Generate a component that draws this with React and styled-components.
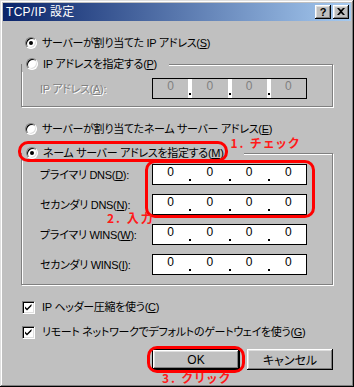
import React from 'react';
import styled, { createGlobalStyle } from 'styled-components';

const GlobalStyle = createGlobalStyle`
  html, body {
    margin: 0;
    padding: 0;
    background: #c0c0c0;
  }
  body {
    font-family: "Liberation Sans", "Noto Sans CJK JP", sans-serif;
    font-size: 11px;
    font-feature-settings: "palt";
  }
`;

const dnsRows = [
  { label: 'プライマリ DNS', key: 'D' },
  { label: 'セカンダリ DNS', key: 'N' },
  { label: 'プライマリ WINS', key: 'W' },
  { label: 'セカンダリ WINS', key: 'I' },
];

// Mnemonic label like "アドレス(S)" with the letter underlined
const Mnemonic = ({ text, k, colon }) => (
  <LabelText>
    {text}(<u>{k}</u>){colon ? ':' : ''}
  </LabelText>
);

const IpField = ({ disabled, row }) => {
  const parts = [];
  for (let i = 0; i < 4; i++) {
    parts.push(<Segment key={`s${i}`}>0</Segment>);
    if (i < 3) parts.push(<Dot key={`d${i}`} />);
  }
  return (
    <IpBox $disabled={disabled} $row={row}>
      {parts}
    </IpBox>
  );
};

const App = () => {
  return (
    <>
      <GlobalStyle />
      <Window>
        <TitleBar>
          <TitleText>TCP/IP 設定</TitleText>
          <TitleButtons>
            <TitleButton aria-label="Help">?</TitleButton>
            <TitleButton aria-label="Close">
              <svg width="8" height="7" viewBox="0 0 8 7">
                <path d="M0 0h2l2 2 2-2h2L5 3.5 8 7H6L4 5 2 7H0l3-3.5z" fill="#000" />
              </svg>
            </TitleButton>
          </TitleButtons>
        </TitleBar>

        <Body>
          <OptionRow>
            <Radio $checked />
            <Mnemonic text="サーバーが割り当てた IP アドレス" k="S" />
          </OptionRow>

          <Group $top={5} $bottom={7}>
            <GroupLegend $gap={12}>
              <OptionRow>
                <Radio />
                <Mnemonic text="IP アドレスを指定する" k="P" />
              </OptionRow>
            </GroupLegend>
            <FieldGrid $padTop={6}>
              <FieldLabel $disabled $row={1}>
                <Mnemonic text="IP アドレス" k="A" colon />
              </FieldLabel>
              <IpField disabled row={1} />
            </FieldGrid>
          </Group>

          <OptionRow $top={14}>
            <Radio />
            <Mnemonic text="サーバーが割り当てたネーム サーバー アドレス" k="E" />
          </OptionRow>

          <Group $top={8} $bottom={9}>
            <GroupLegend $gap={20}>
              <OptionRow>
                <Radio $checked />
                <Mnemonic text="ネーム サーバー アドレスを指定する" k="M" />
                <Highlight $inset="-4px -4px -1px -4px" />
                <Note $left="calc(100% + 7px)" $top="-8px">1. チェック</Note>
              </OptionRow>
            </GroupLegend>
            <FieldGrid $padTop={3}>
              {dnsRows.map((row, i) => (
                <React.Fragment key={row.key}>
                  <FieldLabel $row={i + 1}>
                    <Mnemonic text={row.label} k={row.key} colon />
                  </FieldLabel>
                  <IpField row={i + 1} />
                </React.Fragment>
              ))}
              <FieldHighlight>
                <Highlight $inset="0" />
                <Note $left="-38px" $top="calc(100% - 6px)">2. 入力</Note>
              </FieldHighlight>
            </FieldGrid>
          </Group>

          <OptionRow $top={14}>
            <CheckBox />
            <Mnemonic text="IP ヘッダー圧縮を使う" k="C" />
          </OptionRow>
          <OptionRow $top={9}>
            <CheckBox />
            <Mnemonic text="リモート ネットワークでデフォルトのゲートウェイを使う" k="G" />
          </OptionRow>

          <ButtonRow>
            <ButtonWrap>
              <Button $default>OK</Button>
              <Highlight $inset="-3px -5px -3px -5px" />
              <Note $left="10px" $top="calc(100% + 2px)">3. クリック</Note>
            </ButtonWrap>
            <Button>キャンセル</Button>
          </ButtonRow>
        </Body>
      </Window>
    </>
  );
};

const Window = styled.div`
  width: 354px;
  height: 387px;
  box-sizing: border-box;
  padding: 3px;
  background: #c0c0c0;
  box-shadow: inset -1px -1px #000, inset 1px 1px #dfdfdf,
    inset -2px -2px #808080, inset 2px 2px #fff;
  display: flex;
  flex-direction: column;
  color: #000;
  overflow: hidden;
`;

const TitleBar = styled.div`
  height: 18px;
  flex: none;
  display: flex;
  align-items: center;
  justify-content: space-between;
  padding: 0 2px 0 3px;
  background: linear-gradient(to right, #0a246a, #a6caf0);
`;

const TitleText = styled.div`
  color: #fff;
  font-size: 12px;
  line-height: 18px;
  letter-spacing: 0.3px;
`;

const TitleButtons = styled.div`
  display: flex;
  gap: 2px;
`;

const TitleButton = styled.div`
  width: 16px;
  height: 14px;
  box-sizing: border-box;
  background: #c0c0c0;
  box-shadow: inset -1px -1px #000, inset 1px 1px #fff,
    inset -2px -2px #808080, inset 2px 2px #dfdfdf;
  display: flex;
  align-items: center;
  justify-content: center;
  font-family: "Liberation Sans", sans-serif;
  font-weight: 700;
  font-size: 11px;
  line-height: 14px;
  padding-bottom: 1px;
`;

const Body = styled.div`
  display: flex;
  flex-direction: column;
  padding: 14px 18px 0 18px;
`;

const OptionRow = styled.div`
  position: relative;
  display: flex;
  align-items: center;
  gap: 5px;
  height: 16px;
  margin-top: ${(p) => p.$top || 0}px;
  padding-left: 4px;
  white-space: nowrap;
  line-height: 16px;
`;

const LabelText = styled.span`
  white-space: nowrap;
  letter-spacing: -0.3px;

  u {
    text-decoration-thickness: 1px;
    text-underline-offset: 1px;
  }
`;

const Radio = styled.span`
  position: relative;
  flex: none;
  width: 12px;
  height: 12px;
  box-sizing: border-box;
  border-radius: 50%;
  background: #fff;
  border: 1px solid;
  border-color: #808080 #fff #fff #808080;
  box-shadow: inset 1px 1px #000, inset -1px -1px #dfdfdf;

  &::after {
    content: '';
    display: ${(p) => (p.$checked ? 'block' : 'none')};
    position: absolute;
    left: 3px;
    top: 3px;
    width: 4px;
    height: 4px;
    border-radius: 50%;
    background: #000;
  }
`;

const CheckBox = styled.span`
  flex: none;
  width: 13px;
  height: 13px;
  box-sizing: border-box;
  background: #fff;
  border: 1px solid;
  border-color: #808080 #fff #fff #808080;
  box-shadow: inset 1px 1px #000, inset -1px -1px #dfdfdf;
  margin-left: -3px;
  margin-right: 2px;
  background-image: url("data:image/svg+xml,%3Csvg xmlns='http://www.w3.org/2000/svg' width='11' height='11'%3E%3Cpath d='M2 4.5l2 2 4.5-4.5v2L4 8.5 2 6.5z' fill='%23000'/%3E%3C/svg%3E");
  background-repeat: no-repeat;
  background-position: 0 0;
`;

const Group = styled.fieldset`
  margin: ${(p) => p.$top}px 0 0 0;
  padding: 0 0 ${(p) => p.$bottom}px 0;
  border: 1px solid #808080;
  box-shadow: 1px 1px 0 #fff, inset 1px 1px 0 #fff;
  min-width: 0;
`;

const GroupLegend = styled.legend`
  padding: 0 ${(p) => p.$gap}px 0 0;
  margin-left: 0;
  margin-bottom: 0;
  background: #c0c0c0;
`;

const FieldGrid = styled.div`
  position: relative;
  display: grid;
  grid-template-columns: 112px 155px;
  grid-auto-rows: 21px;
  row-gap: 9px;
  align-items: center;
  padding: ${(p) => p.$padTop}px 0 0 18px;
`;

const FieldLabel = styled.div`
  grid-column: 1;
  grid-row: ${(p) => p.$row};
  white-space: nowrap;
  line-height: 16px;
  color: ${(p) => (p.$disabled ? '#808080' : '#000')};
  text-shadow: ${(p) => (p.$disabled ? '1px 1px 0 #fff' : 'none')};
`;

const IpBox = styled.div`
  grid-column: 2;
  grid-row: ${(p) => p.$row};
  height: 21px;
  box-sizing: border-box;
  display: flex;
  border: 1px solid #000;
  background: ${(p) => (p.$disabled ? '#c0c0c0' : '#fff')};
  color: ${(p) => (p.$disabled ? '#808080' : '#000')};

  & > span:nth-child(even) {
    background: #fff;
  }
`;

const Segment = styled.span`
  flex: 1;
  text-align: center;
  font-family: "Liberation Sans", sans-serif;
  font-size: 12px;
  line-height: 15px;
`;

const Dot = styled.span`
  position: relative;
  width: 4px;
  flex: none;

  &::after {
    content: '';
    position: absolute;
    left: 1px;
    bottom: 3px;
    width: 2px;
    height: 2px;
    background: #000;
  }
`;

const FieldHighlight = styled.div`
  position: relative;
  grid-column: 2;
  grid-row: 1 / span 2;
  align-self: stretch;
  margin: -4px -8px -3px -7px;
  pointer-events: none;
`;

const Highlight = styled.span`
  position: absolute;
  inset: ${(p) => p.$inset};
  border: 3px solid #ff0000;
  border-radius: 10px;
  pointer-events: none;
`;

const Note = styled.span`
  position: absolute;
  left: ${(p) => p.$left};
  top: ${(p) => p.$top};
  color: #ff1a1a;
  font-family: "Noto Sans CJK JP", sans-serif;
  font-size: 12px;
  line-height: 12px;
  font-weight: 700;
  letter-spacing: 2px;
  white-space: nowrap;
`;

const ButtonRow = styled.div`
  display: flex;
  justify-content: flex-end;
  gap: 7px;
  margin-top: 9px;
`;

const ButtonWrap = styled.div`
  position: relative;
  display: flex;
`;

const Button = styled.div`
  width: ${(p) => (p.$default ? 88 : 86)}px;
  height: 21px;
  box-sizing: border-box;
  display: flex;
  align-items: center;
  justify-content: center;
  background: #c0c0c0;
  border: ${(p) => (p.$default ? '1px solid #000' : 'none')};
  box-shadow: inset -1px -1px #000, inset 1px 1px #fff,
    inset -2px -2px #808080, inset 2px 2px #dfdfdf;
  font-size: 12px;
`;

export default App;
